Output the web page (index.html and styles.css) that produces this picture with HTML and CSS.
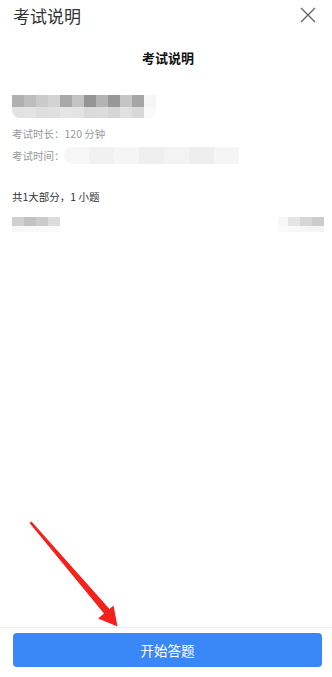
FILE: index.html
```html
<!DOCTYPE html>
<html lang="zh-CN">
<head>
    <meta charset="UTF-8">
    <meta name="viewport" content="width=device-width, initial-scale=1.0">
    <title>考试说明</title>
    <link rel="stylesheet" href="styles.css">
</head>
<body>
    <div class="page">
        <div class="topbar">
            <span class="topbar-title">考试说明</span>
            <svg class="close" width="16" height="16" viewBox="0 0 16 16">
                <path d="M1 1L15 15M15 1L1 15" stroke="#666" stroke-width="1.4" fill="none"/>
            </svg>
        </div>

        <div class="content">
            <h1 class="heading">考试说明</h1>

            <div class="mosaic mosaic-name"></div>
            <p class="info">考试时长：120 分钟</p>
            <p class="info">考试时间：<span class="mosaic mosaic-time"></span></p>

            <p class="summary">共1大部分，1 小题</p>
            <div class="part-row">
                <div class="mosaic mosaic-part"></div>
                <div class="mosaic mosaic-score"></div>
            </div>
        </div>

        <div class="footer">
            <button class="start-btn">开始答题</button>
        </div>

        <!-- annotation arrow drawn over the page -->
        <svg class="arrow" width="332" height="677" viewBox="0 0 332 677">
            <polygon points="29.5,523 31.5,521.5 109.5,609 113.5,605.5 117.5,626.5 98,618.5 104,613.5" fill="#f5221b"/>
        </svg>
    </div>
</body>
</html>
```

FILE: styles.css
```css
body {
    margin: 0;
    padding: 0;
    background: #ffffff;
    font-family: "Noto Sans CJK SC", "Noto Sans", sans-serif;
    color: #333;
}
.page {
    position: relative;
    display: flex;
    flex-direction: column;
    height: 100vh;
    overflow: hidden;
}
.topbar {
    display: flex;
    align-items: center;
    justify-content: space-between;
    height: 31px;
    padding: 0 16px 0 13px;
}
.topbar-title {
    font-size: 17px;
    line-height: 31px;
    color: #333;
}
.close {
    display: block;
    margin-top: -2px;
}
.content {
    flex: 1;
    padding: 0 8px 0 12px;
}
.heading {
    margin: 19px 0 0;
    font-size: 13px;
    line-height: 16px;
    font-weight: bold;
    text-align: center;
    color: #111;
}
.mosaic {
    display: block;
}
.mosaic-name {
    width: 144px;
    height: 23px;
    margin-top: 29px;
    background-image:
        linear-gradient(to right, #b0b0b0 0 12px, #bdbdbd 12px 24px, #cacaca 24px 36px, #d2d2d2 36px 48px, #a8a8a8 48px 60px, #c3c3c3 60px 72px, #959595 72px 84px, #b3b3b3 84px 96px, #989898 96px 108px, #c5c5c5 108px 120px, #a6a6a6 120px 132px, #f6f6f6 132px 144px),
        linear-gradient(to right, #e2e2e2 0 12px, #e4e4e4 12px 24px, #dedede 24px 36px, #e0e0e0 36px 48px, #e6e6e6 48px 60px, #e3e3e3 60px 72px, #d9d9d9 72px 84px, #dcdcdc 84px 96px, #d6d6d6 96px 108px, #e1e1e1 108px 120px, #d8d8d8 120px 132px, #fafafa 132px 144px);
    background-size: 100% 12px, 100% 11px;
    background-position: top, bottom;
    background-repeat: no-repeat;
    border-radius: 0 0 8px 8px;
}
.info {
    display: flex;
    align-items: center;
    margin: 0;
    height: 22px;
    font-size: 10.5px;
    color: #999;
}
.info:first-of-type {
    margin-top: 4px;
}
.mosaic-time {
    width: 175px;
    height: 17px;
    margin-left: -1px;
    border-radius: 8px 0 0 8px;
    background: linear-gradient(to right, #f7f7f7 0 25px, #f1f1f1 25px 50px, #f5f5f5 50px 75px, #efefef 75px 100px, #f3f3f3 100px 125px, #eeeeee 125px 150px, #f5f5f5 150px 175px);
}
.summary {
    margin: 24px 0 0;
    font-size: 10.5px;
    line-height: 14px;
    color: #333;
}
.part-row {
    display: flex;
    justify-content: space-between;
    margin-top: 13px;
}
.mosaic-part {
    width: 48px;
    height: 15px;
    background-image:
        linear-gradient(to right, #d0d0d0 0 12px, #c2c2c2 12px 24px, #cbcbcb 24px 36px, #dcdcdc 36px 48px),
        linear-gradient(to right, #f6f6f6, #fbfbfb);
    background-size: 100% 9px, 100% 6px;
    background-position: top, bottom;
    background-repeat: no-repeat;
}
.mosaic-score {
    width: 46px;
    height: 15px;
    background-image:
        linear-gradient(to right, #f7f7f7 0 10px, #e5e5e5 10px 22px, #d7d7d7 22px 34px, #cccccc 34px 46px),
        linear-gradient(to right, #fbfbfb, #f3f3f3);
    background-size: 100% 9px, 100% 6px;
    background-position: top, bottom;
    background-repeat: no-repeat;
}
.footer {
    border-top: 1px solid #ececec;
    padding: 5px 10px 10px 13px;
}
.start-btn {
    display: block;
    width: 100%;
    height: 34px;
    border: none;
    border-radius: 4px;
    background: #3a87f8;
    color: #ffffff;
    font-family: "Noto Sans CJK SC", sans-serif;
    font-size: 13.5px;
    cursor: pointer;
}
.arrow {
    position: absolute;
    top: 0;
    left: 0;
    pointer-events: none;
}
```
